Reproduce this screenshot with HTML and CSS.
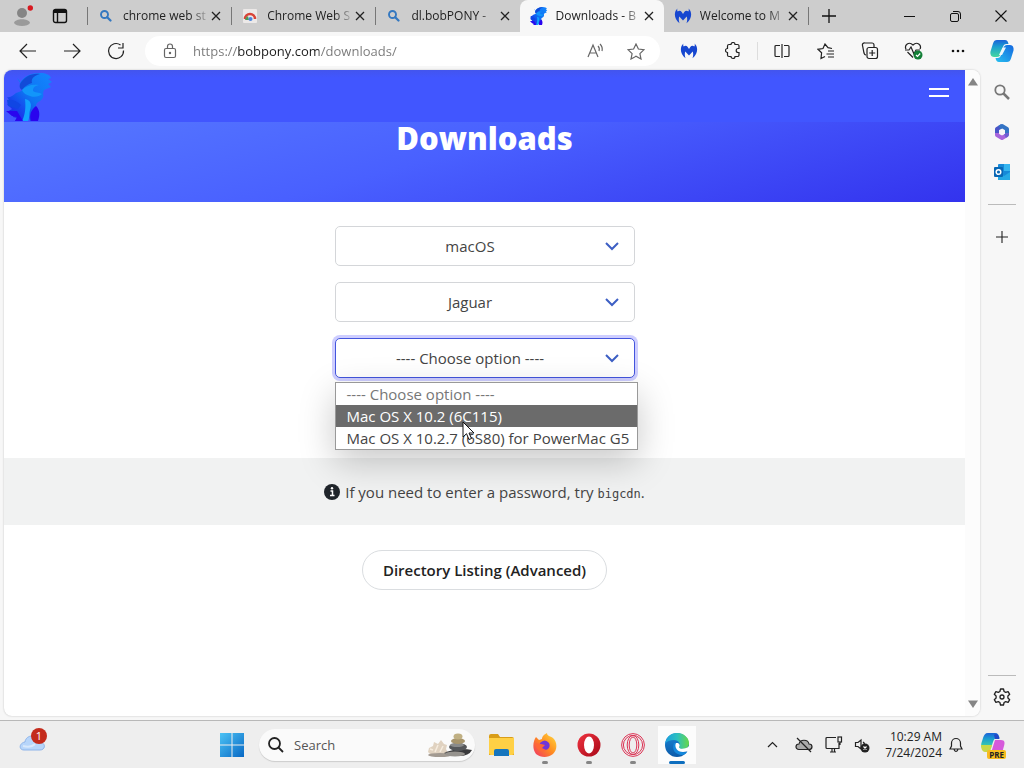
FILE: index.html
```html
<!DOCTYPE html>
<html lang="en">
<head>
<meta charset="utf-8">
<title>Downloads - bobpony.com</title>
<link rel="stylesheet" href="styles.css">
</head>
<body>
<svg class="defs" aria-hidden="true">
  <defs>
    <linearGradient id="g-copilot" x1="0" y1="0" x2="0" y2="1"><stop offset="0" stop-color="#1b62d8"/><stop offset=".4" stop-color="#1b9fd0"/><stop offset="1" stop-color="#45d8a0"/></linearGradient>
    <linearGradient id="g-copilot2" x1="0" y1="1" x2="1" y2="0"><stop offset="0" stop-color="#28c0f0"/><stop offset="1" stop-color="#1468e0"/></linearGradient>
    <linearGradient id="g-win" x1="0" y1="0" x2="1" y2="1"><stop offset="0" stop-color="#4cc3f5"/><stop offset="1" stop-color="#0868c4"/></linearGradient>
    <linearGradient id="g-pony" x1="1" y1="0" x2="0" y2="1"><stop offset="0" stop-color="#1486ff"/><stop offset=".5" stop-color="#0e74f2"/><stop offset="1" stop-color="#2010e8"/></linearGradient>
    <linearGradient id="g-edge" x1="0" y1="0" x2="1" y2="0"><stop offset="0" stop-color="#1c9ee0"/><stop offset=".5" stop-color="#2cc0c0"/><stop offset="1" stop-color="#68d848"/></linearGradient>
    <linearGradient id="g-edge2" x1="0" y1="0" x2="0" y2="1"><stop offset="0" stop-color="#1a86d8"/><stop offset="1" stop-color="#0c5aa8"/></linearGradient>
    <linearGradient id="g-fox" x1="1" y1="0" x2="0" y2="1"><stop offset="0" stop-color="#ffe040"/><stop offset=".5" stop-color="#ff8a20"/><stop offset="1" stop-color="#f0306a"/></linearGradient>
    <linearGradient id="g-opera" x1="0" y1="0" x2="1" y2="1"><stop offset="0" stop-color="#f03440"/><stop offset="1" stop-color="#a80818"/></linearGradient>
    <symbol id="find" viewBox="0 0 14 14"><circle cx="5.5" cy="5.5" r="3.5" fill="none" stroke="#3478c0" stroke-width="1.9"/><path d="M8.2 8.2 11.500 11.500" stroke="#3478c0" stroke-width="2.3" stroke-linecap="round"/></symbol>
    <symbol id="x" viewBox="0 0 10 10"><path d="M1 1l8 8M9 1 1 9" stroke="#222" stroke-width="1.3"/></symbol>
    <symbol id="mb" viewBox="0 0 18 18"><path d="M3.500 1.500C-.3 4.500-.3 12 5.500 16.200 4.600 13.500 4.600 11 5.300 9.500L9 13.500l3.700-4c.7 1.500.7 4-.2 6.700C18.300 12 18.300 4.500 14.500 1.500c.5 1.300.4 2.200-.2 3-1.300-1.200-3-1-4 .4L9 7 7.700 4.900c-1-1.400-2.700-1.600-4-.4-.6-.8-.7-1.700-.2-3z" fill="#1747d0"/></symbol>
    <symbol id="pony" viewBox="0 0 48 48"><path d="M14 10C18 3 25 0 34 0c6 0 10 2 11 5l-3 1 4 3-4 2 3 3-7 3-1 3c1 3 0 6-3 8-3 1-4 3-4 5 3 3 2 9 2 15H24l-1-4-3 4H9l2-3-4-1 1-3-7-2 5-3-5-5 4-1-4-6c4 1 6-2 9-4 3-1 6-2 7-4-3-2-4-5-3-8l-3-3z" fill="url(#g-pony)"/><path d="M14 11C18 4 25 0 34 1c-7 2-9 5-8 9-4 1-7 3-10 7-2-1-3-3-2-6z" fill="#124bd8"/><path d="M16 17c4-4 9-6 17-5-5 1-6 3-6 6 2 2 6 1 9 3-2 2-7 4-12 2-4-1-7-3-8-6z" fill="#1296fa"/><path d="M19 26c6 1 7 6 5 11-1 4 0 7-2 11h-6c3-6 4-13 3-22z" fill="#12a2ff"/><path d="M30 33c4 4 4 9 2 15h-7c-2-6 0-11 5-15zM0 38l11 0 6 10H9l2-4-5-1z" fill="#2a04ee"/><path d="M1 27q8-1 14 5l-3 4-10-3z" fill="#1046e4"/></symbol>
  </defs>
</svg>

<header class="tabbar">
  <button class="profile" aria-label="Profile"><svg width="20" height="22" viewBox="0 0 20 22"><circle cx="9" cy="8" r="5" fill="#858585"/><path d="M1 18c1-5 15-5 16 0-2 4-14 4-16 0z" fill="#9a9a9a"/><circle cx="17.300" cy="3" r="2.700" fill="#d81920"/></svg></button>
  <button class="tabmenu" aria-label="Tab actions"><svg width="16" height="16" viewBox="0 0 16 16" fill="none" stroke="#111" stroke-width="1.400"><rect x="1.500" y="1.500" width="13" height="13" rx="2"/><path d="M2 3.500h12" stroke-width="3"/><path d="M5.500 4v10"/></svg></button>
  <nav class="tabs" aria-label="Tabs">
    <div class="tab"><svg class="fav"><use href="#find"/></svg><a href="#t1">chrome web st</a><button aria-label="Close tab"><svg><use href="#x"/></svg></button></div>
    <div class="tab"><svg class="fav" viewBox="0 0 14 14"><rect width="14" height="14" rx="1" fill="#ece9e8"/><path d="M2 10a5 5 0 0 1 10 0" fill="none" stroke="#d84438" stroke-width="2.500"/><path d="M2 11a5 5 0 0 1 3-4l1 4z" fill="#4d9c58"/><circle cx="7.500" cy="10" r="2" fill="#4b84df"/></svg><a href="#t2">Chrome Web S</a><button aria-label="Close tab"><svg><use href="#x"/></svg></button></div>
    <div class="tab"><svg class="fav"><use href="#find"/></svg><a href="#t3">dl.bobPONY -</a><button aria-label="Close tab"><svg><use href="#x"/></svg></button></div>
    <div class="tab active"><svg class="fav big"><use href="#pony"/></svg><a href="#t4">Downloads - B</a><button aria-label="Close tab"><svg><use href="#x"/></svg></button></div>
    <div class="tab"><svg class="fav big"><use href="#mb"/></svg><a href="#t5">Welcome to M</a><button aria-label="Close tab"><svg><use href="#x"/></svg></button></div>
  </nav>
  <button class="newtab" aria-label="New tab"><svg width="14" height="14" viewBox="0 0 14 14"><path d="M7 0v14M0 7h14" stroke="#111" stroke-width="1.300"/></svg></button>
  <div class="wincontrols">
    <button aria-label="Minimize"><svg width="11" height="11" viewBox="0 0 11 11"><path d="M0 5.500h11" stroke="#111"/></svg></button>
    <button aria-label="Restore"><svg width="11" height="11" viewBox="0 0 11 11" fill="none" stroke="#111"><rect x=".5" y="2.500" width="8" height="8" rx="1.500"/><path d="M3 .5h5a2.500 2.500 0 0 1 2.500 2.500v5"/></svg></button>
    <button aria-label="Close"><svg width="12" height="12" viewBox="0 0 12 12"><path d="M.5.5l11 11M11.500.5l-11 11" stroke="#111" stroke-width="1.100"/></svg></button>
  </div>
</header>

<div class="toolbar">
  <button aria-label="Back"><svg width="18" height="16" viewBox="0 0 18 16"><path d="M8 1 1 8l7 7M1 8h16"/></svg></button>
  <button aria-label="Forward"><svg width="18" height="16" viewBox="0 0 18 16"><path d="M10 1l7 7-7 7M17 8H1"/></svg></button>
  <button aria-label="Refresh"><svg width="18" height="18" viewBox="0 0 18 18"><path d="M16.500 8.500A7.500 7.500 0 1 1 13.500 3M16 1v5h-5"/></svg></button>
  <div class="address">
    <svg class="lock" width="14" height="16" viewBox="0 0 14 16"><rect x="1.500" y="5.500" width="11" height="9" rx="1.500"/><path d="M4.500 5V3.500a2.500 2.500 0 0 1 5 0V5"/><circle cx="7" cy="10" r=".6"/></svg>
    <input type="text" aria-label="Address" value="https://bobpony.com/downloads/">
    <button aria-label="Read aloud"><svg width="18" height="16" viewBox="0 0 18 16"><path d="M1 14 6 2l5 12M3 10h6M11 3q2 2 1 5M13 1q3 3 2 7"/></svg></button>
    <button aria-label="Favorite"><svg width="18" height="17" viewBox="0 0 18 17"><path d="M9 1l2.400 5 5.600.7-4.100 3.900 1.100 5.400L9 13.300 4 16l1.100-5.400L1 6.700 6.600 6z"/></svg></button>
  </div>
  <button aria-label="Malwarebytes"><svg width="18" height="18"><use href="#mb"/></svg></button>
  <button aria-label="Extensions"><svg width="16" height="18" viewBox="0 0 16 18"><path d="M4 2.500h2a2 2 0 0 1 4 0h2.500a1.500 1.500 0 0 1 1.500 1.500v2.500h-.8a2 2 0 0 0 0 4h.8V13a1.500 1.500 0 0 1-1.500 1.500H10a2 2 0 0 1-4 0H4A1.500 1.500 0 0 1 2.500 13v-2.500a2 2 0 0 1 0-4V4A1.500 1.500 0 0 1 4 2.500z"/></svg></button>
  <span class="rule"></span>
  <button aria-label="Split screen"><svg width="16" height="16" viewBox="0 0 16 16"><path d="M8 1v14M6 2.500H2a1 1 0 0 0-1 1v9a1 1 0 0 0 1 1h4M10 2.500h4a1 1 0 0 1 1 1v9a1 1 0 0 1-1 1h-4"/></svg></button>
  <button aria-label="Favorites"><svg width="18" height="17" viewBox="0 0 18 17"><path d="M15 5.500l-4-.8L8 1 6 5.500l-5 .8 3.600 3.500L4 15.500l4-2M11 8h6M9.500 11H17M11 14h6"/></svg></button>
  <button aria-label="Collections"><svg width="18" height="18" viewBox="0 0 18 18"><path d="M13 5V3a2 2 0 0 0-2-2H4a2 2 0 0 0-2.500 2.500L3 11q.5 2 2 2"/><rect x="6" y="5.500" width="10.500" height="11" rx="2"/><path d="M11.200 8v6M8.200 11h6"/></svg></button>
  <button aria-label="Browser essentials"><svg width="20" height="18" viewBox="0 0 20 18"><path d="M2 7C0 3 5-1 9 3c4-4 9 0 7 4M3.500 10 9 15.500M1 8h4l2-3 3 7 2-4h4"/><circle cx="14" cy="13" r="4.500" fill="#148038" stroke="none"/><path d="M12 13l1.500 1.500 2.700-3" stroke="#fff"/></svg></button>
  <button aria-label="Settings and more"><svg width="14" height="4" viewBox="0 0 14 4"><g fill="#111" stroke="none"><circle cx="2" cy="2" r="1.300"/><circle cx="7" cy="2" r="1.300"/><circle cx="12" cy="2" r="1.300"/></g></svg></button>
  <button aria-label="Copilot"><svg width="24" height="24" viewBox="0 0 24 24"><g stroke="none"><path d="M7 1h8c2 0 3 1.500 3.500 4h-2c-2 0-3 1-3.500 3l-2 6c-1 3-2 4-4 4H4c-3 0-4-3-3.500-5.500L3 4.500C3.700 2 5 1 7 1z" fill="url(#g-copilot)"/><path d="M17 23H9c-2 0-3-1.500-3.500-4h2c2 0 3-1 3.500-3l2-6c1-3 2-4 4-4h3c3 0 4 3 3.500 5.500L21 19.500c-.7 2.500-2 3.500-4 3.500z" fill="url(#g-copilot2)"/><path d="M12.500 8.500h3.500L12 16H9z" fill="#eef6fc"/></g></svg></button>
</div>

<div class="workspace">
  <div class="page">
    <main class="site">
      <header class="sitebar">
        <a href="#home" aria-label="Home"><svg width="48" height="50"><use href="#pony"/></svg></a>
        <button aria-label="Menu"><svg width="20" height="10" viewBox="0 0 20 10"><path d="M0 1h20M0 8h20" stroke="#fff" stroke-width="2"/></svg></button>
      </header>
      <div class="hero"><h1>Downloads</h1></div>
      <form class="picker">
        <select aria-label="Product"><option>macOS</option></select>
        <select aria-label="Version"><option>Jaguar</option></select>
        <div class="open">
          <select class="focused" aria-label="Release"><option>---- Choose option ----</option></select>
          <ul class="options" role="listbox" aria-label="Release options">
            <li role="option" class="muted">---- Choose option ----</li>
            <li role="option" class="current" aria-selected="true">Mac OS X 10.2 (6C115)</li>
            <li role="option">Mac OS X 10.2.7 (6S80) for PowerMac G5</li>
          </ul>
          <svg class="cursor" width="13" height="20" viewBox="0 0 13 20"><path d="M1 1v15l3.500-3.300L7 18.500l2.500-1L7 12h5z" fill="#fff" stroke="#111"/></svg>
        </div>
      </form>
      <p class="notice"><svg width="16" height="16" viewBox="0 0 16 16"><circle cx="8" cy="8" r="8" fill="#20252b"/><path d="M6.500 7H8.500v4.500M6 11.500h4.500" fill="none" stroke="#fff" stroke-width="1.500"/><circle cx="8" cy="4.200" r="1.200" fill="#fff"/></svg><span>If you need to enter a password, try <code>bigcdn</code>.</span></p>
      <div class="actions"><button>Directory Listing (Advanced)</button></div>
    </main>
    <div class="scroll"><svg width="10" height="8" viewBox="0 0 10 8"><path d="M5 0l5 7.500H0z" fill="#858585"/></svg><svg width="10" height="8" viewBox="0 0 10 8"><path d="M0 .5h10L5 8z" fill="#858585"/></svg></div>
  </div>
  <aside class="sidebar">
    <button aria-label="Search"><svg width="16" height="16" viewBox="0 0 16 16" fill="none" stroke="#777"><circle cx="6" cy="6" r="4.700" stroke-width="1.800"/><path d="M9.500 9.500 15 15" stroke-width="2.500"/></svg></button>
    <button aria-label="Microsoft 365"><svg width="18" height="18" viewBox="0 0 18 18" fill="none" stroke-width="4" stroke-linejoin="round"><path d="M9 3 4 6v6" stroke="#4a55c8"/><path d="M4 10v2l5 3 5-3" stroke="#a865dc"/><path d="M14 12V6L9 3 6.500 4.500" stroke="#3474c4"/><path d="M12 13l2-1v-2" stroke="#6c5fd2"/></svg></button>
    <button aria-label="Outlook"><svg width="18" height="18" viewBox="0 0 18 18"><rect x="5" y="1" width="12" height="15" rx="1" fill="#1689d8"/><path d="M11 1h6v7h-6z" fill="#35b5ef"/><path d="M5 9l6 4 6-4v8H5z" fill="#25a9e5"/><rect x="1" y="4" width="9" height="10" rx="1" fill="#0867b5"/><circle cx="5.500" cy="9" r="2.300" fill="none" stroke="#fff" stroke-width="1.500"/></svg></button>
    <hr>
    <button aria-label="Add"><svg width="12" height="12" viewBox="0 0 12 12"><path d="M6 0v12M0 6h12" stroke="#222" stroke-width="1.100"/></svg></button>
    <hr class="last">
    <button aria-label="Settings"><svg width="18" height="18" viewBox="0 0 18 18" fill="none" stroke="#222" stroke-width="1.300"><path d="M7.500 1h3l.6 2.500 1.600.9 2.400-.8 1.600 2.700L14.900 8v2l1.800 1.700-1.600 2.700-2.400-.8-1.600.9-.6 2.500h-3l-.6-2.500-1.600-.9-2.400.8-1.600-2.700L3.100 10V8L1.300 6.300l1.600-2.700 2.400.8 1.600-.9z" stroke-linejoin="round"/><circle cx="9" cy="9" r="2"/></svg></button>
  </aside>
</div>

<footer class="taskbar">
  <button class="weather" aria-label="Widgets, 1 new"><svg width="28" height="26" viewBox="0 0 28 26"><path d="M5 23C-.5 23 0 16 6 15c1-8 13-8 14 0 7 0 7 8 1 8z" fill="#b7d5fa" stroke="#8eb4ea"/><path d="M4 19q8 2 12-2" stroke="#d8e8fc" stroke-width="2" fill="none"/></svg><span>1</span></button>
  <button class="app" aria-label="Start"><svg width="24" height="24" viewBox="0 0 24 24"><path d="M0 0h11.500v11.500H0zM12.500 0H24v11.500H12.500zM0 12.500h11.500V24H0zM12.500 12.500H24V24H12.500z" fill="url(#g-win)"/></svg></button>
  <label class="search"><svg width="16" height="16" viewBox="0 0 16 16" fill="none" stroke="#222" stroke-width="1.800"><circle cx="6.500" cy="6.500" r="5.500"/><path d="M10.500 10.500 15 15"/></svg><input type="text" placeholder="Search" aria-label="Search">
    <svg width="46" height="26" viewBox="0 0 46 26"><path d="M2 20l1-4 4-2 1-4 4 2 3-4 3 4 3 1-1 4 2 4-4 2H5z" fill="#e0d2c0"/><path d="M9 20l3-7M14 20l3-6M7 18l-3-1" stroke="#f6ecde" stroke-width="1.500"/><ellipse cx="14" cy="23" rx="12" ry="2" fill="#a29a91"/><path d="M18 21q14-6 28-3-3 6-13 6-11 0-15-3z" fill="#3a3a3c"/><ellipse cx="29" cy="22" rx="10" ry="2.500" fill="#96938e"/><ellipse cx="32" cy="15" rx="9" ry="4" fill="#55575a"/><ellipse cx="31" cy="13" rx="7" ry="2" fill="#898a8a"/><ellipse cx="32" cy="9" rx="7" ry="3" fill="#a8956c"/><ellipse cx="32" cy="4.500" rx="4.500" ry="3" fill="#c0b083"/></svg></label>
  <nav class="apps" aria-label="Pinned apps">
    <button class="app" aria-label="File Explorer"><svg width="25" height="22" viewBox="0 0 25 22"><path d="M0 2q0-2 2-2h7l2 3h12q2 0 2 2v16H0z" fill="#d99d18"/><path d="M0 4h25v15q0 2-2 2H2q-2 0-2-2z" fill="#ffd045"/><path d="M5 22v-5q0-2 2-2h11q2 0 2 2v5z" fill="#1675bd"/></svg></button>
    <button class="app running" aria-label="Firefox"><svg width="24" height="24" viewBox="0 0 24 24"><path d="M3 4l3 3 3-1c0-3 3-5 5-6 0 3 3 3 6 5 5 5 4 12 0 16-5 4-12 4-17 0C-1 16 0 8 3 4z" fill="url(#g-fox)"/><path d="M7 10q5-5 9 0c2 4-1 7-4 7-4 0-6-3-5-7z" fill="#7136d8"/><path d="M2 10l6 1 4 1-3 3 4 2c-5 4-10-1-11-7z" fill="#ff6735"/></svg></button>
    <button class="app running" aria-label="Opera"><svg width="24" height="24" viewBox="0 0 24 24"><circle cx="12" cy="12" r="11.500" fill="url(#g-opera)"/><ellipse cx="12" cy="12" rx="5" ry="8.500" fill="#fff"/></svg></button>
    <button class="app running" aria-label="Opera GX"><svg width="24" height="24" viewBox="0 0 24 24" fill="none" stroke="#dc3455" stroke-width="1"><circle cx="12" cy="12" r="11.400"/><circle cx="12" cy="12" r="9.600"/><ellipse cx="12" cy="12" rx="5.800" ry="9.600"/><ellipse cx="12" cy="12" rx="3.800" ry="8"/></svg></button>
    <button class="app running selected" aria-label="Microsoft Edge"><svg width="24" height="24" viewBox="0 0 24 24"><circle cx="12" cy="12" r="12" fill="url(#g-edge2)"/><path d="M0 11C1 3 7 0 12 0c7 0 12 5 12 10 0 4-3 6-6 6s-4-1-4-2c2-3 0-7-5-7-4 0-7 1-9 4z" fill="url(#g-edge)"/><path d="M9 10c-3 7 2 12 8 12 2 0 4-1 5-3-4 1-9 0-11-4-1-2 0-4 1-5z" fill="#1488dc"/><path d="M11 10c-2 4 1 9 7 9 3 0 5-1 6-2v-4c-2 3-10 4-10 1 1-1 1-3-1-4z" fill="#fff"/></svg></button>
  </nav>
  <div class="tray">
    <button aria-label="Show hidden icons"><svg width="11" height="7" viewBox="0 0 11 7"><path d="M1 6l4.500-4.500L10 6"/></svg></button>
    <button aria-label="OneDrive"><svg width="18" height="16" viewBox="0 0 18 16"><path d="M4 12.500C0 12.500 0 7 4 7c1-5 9-5 10 0 4 0 4 5.500 0 5.500z" fill="#aaa"/><path d="M2 1l14 14"/></svg></button>
    <button aria-label="Network"><svg width="18" height="17" viewBox="0 0 18 17"><path d="M11 1.500H2q-1 0-1 1v9q0 1 1 1h12V7M5 16h6M7 12.500V16M9.500 12.500V16M15 6v3"/><rect x="13" y="1" width="3.500" height="5"/></svg></button>
    <button aria-label="Volume"><svg width="16" height="16" viewBox="0 0 16 16"><path d="M7 12 4 9.500H1.500v-4H4L7 3v8M9 5q2 1 1 3"/><circle cx="11" cy="11" r="4.500" fill="#222" stroke="none"/><path d="M9.500 9.500l3 3M12.500 9.500l-3 3" stroke="#fff"/></svg></button>
    <button class="clock"><time>10:29 AM</time><time>7/24/2024</time></button>
    <button aria-label="Notifications"><svg width="14" height="16" viewBox="0 0 14 16"><path d="M1 12l1.500-3V6a4.500 4.500 0 0 1 9 0v3l1.500 3zM5 12.500q2 4 4 0"/></svg></button>
    <button class="pre" aria-label="Copilot preview"><svg width="24" height="24" viewBox="0 0 24 24"><g stroke="none"><path d="M7 0h7c3 0 4 2 4.500 5H16c-2 0-3 1-4 4l-2 6H1c-2-3 0-6 1-10 1-3 2-5 5-5z" fill="url(#g-copilot)"/><path d="M0 12h11l-2 7H4c-3 0-4-4-4-7z" fill="#c8d848"/><path d="M14 7h6c4 0 4 3 3 6l-2 7H10z" fill="#d65adb"/><path d="M13 2c3-3 5 1 5.500 4H14z" fill="#2348c8"/></g></svg><span>PRE</span></button>
  </div>
</footer>
</body>
</html>
```

FILE: styles.css
```css
* { box-sizing: border-box; }
body {
  margin: 0;
  height: 100vh;
  display: flex;
  flex-direction: column;
  overflow: hidden;
  background: #f7f7f7;
  color: #222;
  font: 12px/16px "Open Sans", "Noto Sans", sans-serif;
}
button {
  display: flex;
  align-items: center;
  justify-content: center;
  flex: none;
  padding: 0;
  border: 0;
  background: none;
  color: inherit;
  font: inherit;
}
input { font: inherit; border: 0; outline: 0; background: none; padding: 0; min-width: 0; }
.defs { position: absolute; width: 0; height: 0; }

/* Tab strip */
.tabbar { display: flex; flex: none; height: 32px; background: #cdcdcd; }
.profile { width: 46px; }
.tabmenu { width: 28px; }
.tabs { display: flex; flex: 0 1 721px; margin-left: 13px; min-width: 0; }
.tab {
  flex: 1;
  display: flex;
  align-items: center;
  padding: 0 8px 0 12px;
  min-width: 0;
  background: linear-gradient(#777, #777) left center / 1px 18px no-repeat;
}
.tab.active { background: #f7f7f7; border-radius: 8px 8px 0 0; }
.tab.active + .tab { background: none; }
.tab a {
  flex: 1;
  min-width: 0;
  margin-left: 10px;
  white-space: nowrap;
  color: #222;
  text-decoration: none;
  mask-image: linear-gradient(to right, #000 78%, transparent 102%);
}
.tab button { width: 14px; height: 16px; }
.tab button svg { width: 10px; height: 10px; }
.fav { flex: none; width: 14px; height: 14px; }
.fav.big { width: 18px; height: 18px; margin: 0 -2px; }
.newtab { width: 42px; background: linear-gradient(#777, #777) left center / 1px 18px no-repeat; }
.wincontrols { display: flex; margin-left: auto; }
.wincontrols button { width: 46px; }

/* Toolbar */
.toolbar { display: flex; flex: none; height: 38px; padding-left: 6px; align-items: center; }
.toolbar > button { width: 44px; height: 38px; }
.toolbar > button:last-child { width: 44px; }
.toolbar svg { fill: none; stroke: #222; stroke-width: 1.2; }
.toolbar use { stroke: none; }
.address {
  flex: 1;
  display: flex;
  align-items: center;
  height: 30px;
  margin: 0 7px;
  padding-left: 18px;
  border-radius: 15px;
  background: #fff;
}
.address svg { stroke: #666; }
.address input {
  flex: 1;
  margin-left: 16px;
  font-size: 13px;
  line-height: 20px;
  color: transparent;
  background: linear-gradient(to right, #777 44px, #1b1b1b 44px 126px, #777 126px);
  background-clip: text;
}
.address button { width: 40px; }
.address button:last-child { margin-right: 4px; }
.rule { width: 1px; height: 18px; margin: 0 2px; background: #ddd; }

/* Web page */
.workspace { display: flex; flex: 1; min-height: 0; padding: 0 0 4px 4px; }
.page {
  flex: 1;
  display: flex;
  min-width: 0;
  overflow: hidden;
  border-radius: 8px;
  background: #fff;
  box-shadow: 0 0 2px #bbb;
}
.site { flex: 1; min-width: 0; font-size: 15px; line-height: 22px; }
.scroll { display: flex; flex-direction: column; justify-content: space-between; align-items: center; width: 15px; padding: 8px 0; background: #fcfcfc; }
.sitebar {
  display: flex;
  justify-content: space-between;
  align-items: flex-end;
  height: 52px;
  padding: 0 16px 0 2px;
  background: linear-gradient(#4355ee, #4156ff 8px);
}
.sitebar a, .sitebar svg { display: block; }
.sitebar button { height: 58px; }
.hero { height: 80px; background: linear-gradient(165deg, #5678ff, #4960ff 45%, #3333ee); color: #fff; text-align: center; }
.hero h1 { margin: 0; font-size: 31px; line-height: 32px; font-weight: 800; }
.picker { display: flex; flex-direction: column; align-items: center; gap: 16px; padding: 24px 0 80px; }
.picker select {
  display: block;
  appearance: none;
  width: 300px;
  height: 40px;
  padding: 0 40px 0 11px;
  border: 1px solid #d4d6d9;
  border-radius: 5px;
  background: #fff url("data:image/svg+xml,%3Csvg xmlns='http://www.w3.org/2000/svg' width='16' height='10' viewBox='0 0 16 10'%3E%3Cpath d='M2 2l6 6 6-6' fill='none' stroke='%233d5fc4' stroke-width='2'/%3E%3C/svg%3E") right 14px center no-repeat;
  color: #444;
  font: inherit;
  text-align: center;
  text-align-last: center;
}
.picker select.focused { border-color: #4355dd; box-shadow: 0 0 0 3px #ceceff; outline: 0; }
.open { position: relative; }
.options {
  position: absolute;
  top: 44px;
  left: 0;
  z-index: 1;
  width: max-content;
  min-width: 100%;
  margin: 0;
  padding: 0;
  border: 1px solid #999;
  background: #fff;
  list-style: none;
  white-space: nowrap;
  box-shadow: 0 12px 36px rgba(0, 0, 0, .22);
}
.options li { padding: 0 8px 0 11px; color: #444; }
.options .muted { color: #777; }
.options .current { background: #6b6b6b; color: #fff; }
.cursor { position: absolute; top: 83px; left: 127px; z-index: 2; }
.notice { display: flex; justify-content: center; align-items: center; gap: 5px; margin: 0; padding: 23px 0 22px; background: #f1f2f2; color: #444; }
.notice code { font: 12px "DejaVu Sans Mono", monospace; }
.actions { display: flex; justify-content: center; padding-top: 25px; }
.actions button { height: 40px; padding: 0 20px; border: 1px solid #dadde0; border-radius: 20px; background: #fff; font-weight: 600; }

/* Browser sidebar */
.sidebar { display: flex; flex-direction: column; align-items: center; flex: none; width: 44px; padding: 2px 0 0; }
.sidebar button { width: 40px; height: 40px; }
.sidebar hr { width: 28px; margin: 12px 0; border: 0; border-top: 1px solid #bbb; }
.sidebar hr.last { margin: auto 0 2px; }
.sidebar button:last-child { height: 38px; }

/* Taskbar */
.taskbar { display: flex; flex: none; align-items: center; height: 48px; border-top: 1px solid #b8b8b8; background: #eee; }
.weather { position: relative; width: 66px; height: 46px; margin-right: 144px; }
.weather svg { margin-bottom: 10px; }
.weather span { position: absolute; top: 6px; left: 31px; width: 16px; height: 16px; border-radius: 8px; background: #c42b1c; color: #fff; font-size: 11px; text-align: center; }
.app { position: relative; width: 44px; height: 46px; }
.search { display: flex; align-items: center; flex: 0 1 216px; min-width: 0; height: 32px; margin: 0 4px 0 5px; padding: 0 3px 0 9px; border-radius: 16px; background: #fafafa; box-shadow: 0 1px 1px #ccc; }
.search svg { flex: none; }
.search input { flex: 1; margin-left: 10px; font-size: 13px; line-height: 18px; }
.search input::placeholder { color: #555; opacity: 1; }
.apps { display: flex; }
.running::after { content: ""; position: absolute; bottom: 4px; left: 19px; width: 6px; height: 3px; border-radius: 2px; background: #858585; }
.selected { background: linear-gradient(#fcfcfc, #fcfcfc) center / 38px 38px no-repeat; }
.selected::after { left: 14px; width: 16px; background: #0e6ebe; }
.tray { display: flex; align-items: center; margin-left: auto; padding-right: 18px; }
.tray > button { width: 28px; height: 44px; }
.tray > button:nth-child(-n+2) { width: 32px; }
.tray svg { fill: none; stroke: #222; stroke-width: 1.2; }
.tray .clock { display: block; width: 66px; text-align: right; font-size: 12px; line-height: 16px; }
.clock time { display: block; }
.tray .pre { position: relative; width: 26px; margin-left: 10px; }
.pre span { position: absolute; right: 0; bottom: 8px; padding: 0 2px; border-radius: 2px; background: #f7bd20; font-size: 8px; line-height: 9px; font-weight: 700; }
```
